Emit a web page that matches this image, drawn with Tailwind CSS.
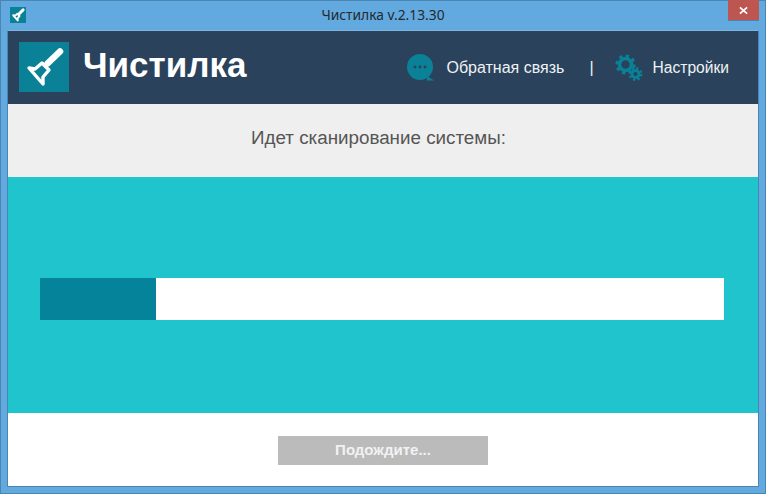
<!DOCTYPE html>
<html lang="ru">

<head>
  <meta charset="UTF-8">
  <title>Чистилка</title>
  <script src="https://cdn.jsdelivr.net/npm/@tailwindcss/browser@4"></script>
</head>

<body class="w-[766px] h-[494px] overflow-hidden font-['Liberation_Sans',sans-serif]">
  <div class="flex flex-col w-full h-full bg-[#62a9e0] border border-[#4a86b4]">
    <!-- title bar -->
    <div class="relative flex items-center justify-center h-[29px] shrink-0">
      <div class="absolute left-[9px] top-[6px] flex items-center justify-center w-4 h-4 bg-[#0a8196]">
        <svg viewBox="0 0 50 50" class="w-4 h-4">
          <path d="M28 22 L41 9" stroke="#fff" stroke-width="9" stroke-linecap="round" fill="none" />
          <path d="M10 26 L16 27 L23 21 L30 28 L24 35 L24 42 Z" stroke="#fff" stroke-width="6" stroke-linejoin="round" fill="none" />
        </svg>
      </div>
      <p class="font-['Noto_Sans',sans-serif] text-[13.800px] text-[#24292e] -mt-px">Чистилка v.2.13.30</p>
      <div class="absolute right-[6px] -top-px flex items-center justify-center w-[31px] h-[21px] bg-[#bd5650] border-b border-[#4a86b4]">
        <svg viewBox="0 0 10 10" class="w-[9px] h-[9px]">
          <path d="M1 1.500 L9 8.500 M9 1.500 L1 8.500" stroke="#fff" stroke-width="1.900" fill="none" />
        </svg>
      </div>
    </div>

    <div class="flex flex-col flex-1 mx-[6px] mb-[6px] border border-[#4a86b4] border-t-[#7fb4dc]">
      <!-- header -->
      <header class="flex items-center h-[73px] shrink-0 pl-[11px] bg-[#2a425c] text-white">
        <div class="flex items-center justify-center w-[50px] h-[50px] -mt-[2px] bg-[#0a8196]">
          <svg viewBox="0 0 50 50" class="w-[50px] h-[50px]">
            <path d="M28.500 21.500 L41 9.500" stroke="#fff" stroke-width="6.500" stroke-linecap="round" fill="none" />
            <path d="M10 26 L16 27 L23 21 L30 28 L24 35 L24 42 Z" stroke="#fff" stroke-width="3.400" stroke-linejoin="round" fill="none" />
          </svg>
        </div>
        <h1 class="ml-[14px] text-[35px] leading-none font-bold -mt-[6px]">Чистилка</h1>
        <nav class="flex items-center ml-auto text-[16px] text-[#eef2f5]">
          <svg viewBox="0 0 28 28" class="mt-px w-[28px] h-[28px]">
            <circle cx="13" cy="13" r="13" fill="#0a8196" />
            <path d="M20 22 L27 26.500 L20 26.500 Z" fill="#0a8196" />
            <circle cx="8" cy="13" r="1.400" fill="#2a425c" />
            <circle cx="13" cy="13" r="1.400" fill="#2a425c" />
            <circle cx="18" cy="13" r="1.400" fill="#2a425c" />
          </svg>
          <span class="ml-[11px]">Обратная связь</span>
          <span class="ml-[25px]">|</span>
          <svg viewBox="0 0 28 28" class="ml-[21px] mt-px w-[28px] h-[28px]">
            <g fill="none" stroke="#0a8196">
              <circle cx="10.500" cy="10.500" r="6" stroke-width="3.500" />
              <circle cx="10.500" cy="10.500" r="8.600" stroke-width="3" stroke-dasharray="3.400 3.350" />
              <circle cx="20.500" cy="20" r="3.500" stroke-width="2.800" />
              <circle cx="20.500" cy="20" r="5.800" stroke-width="2.400" stroke-dasharray="2.300 2.250" />
            </g>
          </svg>
          <span class="ml-[10px] mr-[29px] text-[15.600px]">Настройки</span>
        </nav>
      </header>

      <div class="flex items-center justify-center h-[73px] shrink-0 bg-[#efefef]">
        <p class="mr-[9px] text-[18.800px] text-[#555] -mt-[4px]">Идет сканирование системы:</p>
      </div>

      <!-- progress -->
      <div class="flex items-center h-[236px] shrink-0 pl-[32px] pr-[34px] pt-[8px] bg-[#20c4cc]">
        <div class="w-full h-[42px] bg-white">
          <div class="h-full w-[116px] bg-[#05839a]"></div>
        </div>
      </div>

      <div class="flex flex-1 justify-center pt-[23px] bg-white">
        <button class="flex items-center justify-center w-[210px] h-[29px] bg-[#bbbbbb] text-[15px] font-bold text-[#f2f2f2]">Подождите...</button>
      </div>
    </div>
  </div>
</body>

</html>
